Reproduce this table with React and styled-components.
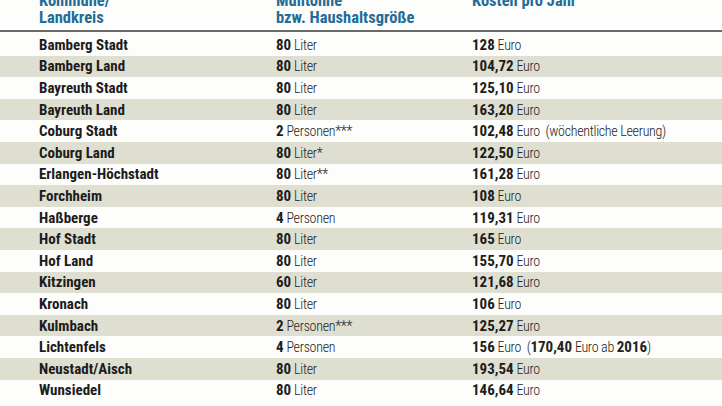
import styled, { createGlobalStyle } from 'styled-components';

const rows = [
  ['Bamberg Stadt', ['80', ' Liter'], ['128', ' Euro']],
  ['Bamberg Land', ['80', ' Liter'], ['104,72', ' Euro']],
  ['Bayreuth Stadt', ['80', ' Liter'], ['125,10', ' Euro']],
  ['Bayreuth Land', ['80', ' Liter'], ['163,20', ' Euro']],
  ['Coburg Stadt', ['2', ' Personen***'], ['102,48', ' Euro', '  (wöchentliche Leerung)']],
  ['Coburg Land', ['80', ' Liter*'], ['122,50', ' Euro']],
  ['Erlangen-Höchstadt', ['80', ' Liter**'], ['161,28', ' Euro']],
  ['Forchheim', ['80', ' Liter'], ['108', ' Euro']],
  ['Haßberge', ['4', ' Personen'], ['119,31', ' Euro']],
  ['Hof Stadt', ['80', ' Liter'], ['165', ' Euro']],
  ['Hof Land', ['80', ' Liter'], ['155,70', ' Euro']],
  ['Kitzingen', ['60', ' Liter'], ['121,68', ' Euro']],
  ['Kronach', ['80', ' Liter'], ['106', ' Euro']],
  ['Kulmbach', ['2', ' Personen***'], ['125,27', ' Euro']],
  ['Lichtenfels', ['4', ' Personen'], ['156', ' Euro', 'extra']],
  ['Neustadt/Aisch', ['80', ' Liter'], ['193,54', ' Euro']],
  ['Wunsiedel', ['80', ' Liter'], ['146,64', ' Euro']],
];

const Global = createGlobalStyle`
  body {
    margin: 0;
    background: #fdfdfb;
    font-family: Roboto, "Liberation Sans", sans-serif;
    font-stretch: 75%;
    color: #1c1c1c;
    overflow: hidden;
  }
`;

const Page = styled.div`
  width: 722px;
  height: 406px;
  overflow: hidden;
`;

const Head = styled.div`
  display: grid;
  grid-template-columns: 237px 196px 1fr;
  padding-left: 39px;
  margin-top: -8px;
  height: 38px;
  border-bottom: 2px solid #6a6a6a;
  color: #246c98;
  font-weight: bold;
  font-size: 16.5px;
  line-height: 17px;
`;

const HeadCell = styled.div``;

const Body = styled.div`
  padding-top: 2px;
`;

const Row = styled.div`
  display: grid;
  grid-template-columns: 237px 196px 1fr;
  padding-left: 39px;
  height: 21.6px;
  align-items: center;
  background: ${p => (p.$shade ? '#dfdfd1' : 'transparent')};
  font-size: 15px;
`;

const Name = styled.div`
  font-weight: bold;
`;

const Cell = styled.div`
  white-space: pre;
`;

const Num = styled.b`
  font-weight: bold;
  font-size: 15px;
  letter-spacing: 0;
`;

const Unit = styled.span`
  font-weight: 300;
  font-size: 14px;
  letter-spacing: -0.3px;
  color: #222;
`;

const App = () => (
  <Page>
    <Global />
    <Head>
      <HeadCell>Kommune/<br />Landkreis</HeadCell>
      <HeadCell>Mülltonne<br />bzw. Haushaltsgröße</HeadCell>
      <HeadCell>Kosten pro Jahr</HeadCell>
    </Head>
    <Body>
      {rows.map(([name, size, cost], i) => (
        <Row key={name} $shade={i % 2 === 1}>
          <Name>{name}</Name>
          <Cell><Num>{size[0]}</Num><Unit>{size[1]}</Unit></Cell>
          <Cell>
            <Num>{cost[0]}</Num><Unit>{cost[1]}</Unit>
            {cost[2] === 'extra' ? (
              <Unit>  (<Num>170,40</Num> Euro ab <Num>2016</Num>)</Unit>
            ) : cost[2] ? <Unit>{cost[2]}</Unit> : null}
          </Cell>
        </Row>
      ))}
    </Body>
  </Page>
);

export default App;
